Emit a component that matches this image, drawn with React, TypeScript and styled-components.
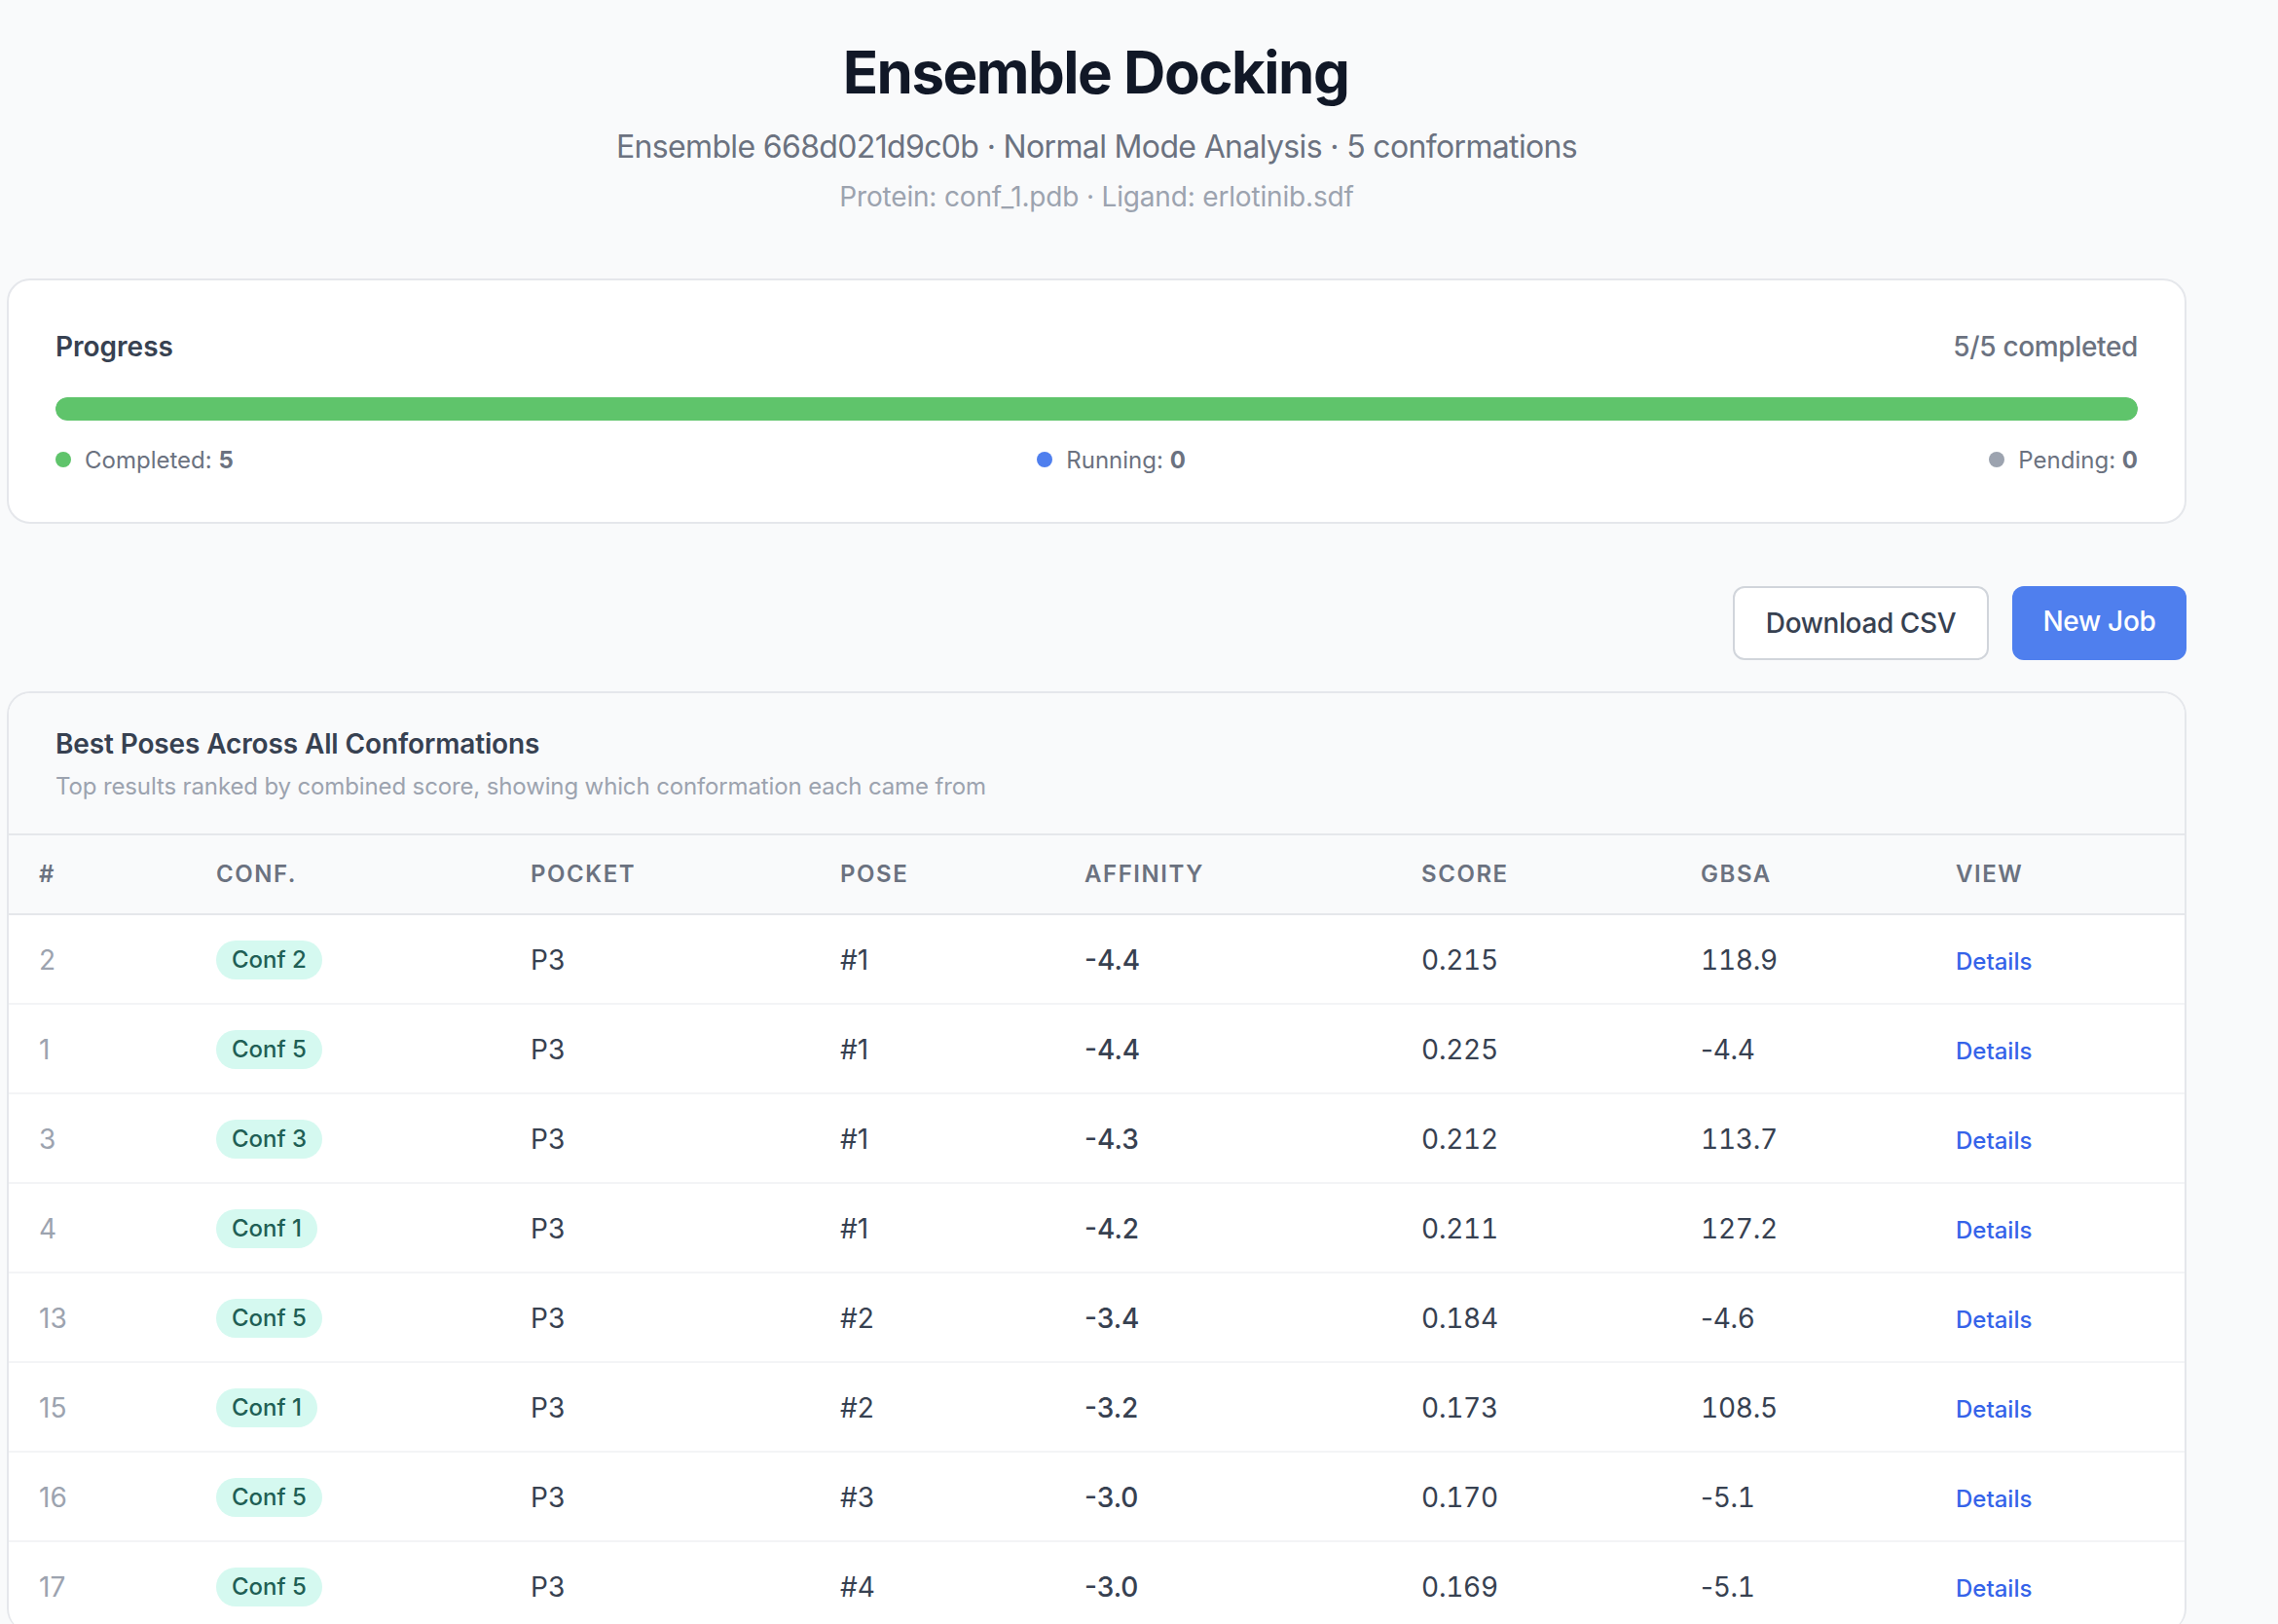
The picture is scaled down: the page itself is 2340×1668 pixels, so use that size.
import React from 'react';
import styled, { createGlobalStyle } from 'styled-components';

const GlobalStyle = createGlobalStyle`
  html,
  body {
    margin: 0;
    height: 1668px;
    overflow: hidden;
    background: #f9fafb;
    font-family: Inter, 'Noto Sans', sans-serif;
  }

  * {
    box-sizing: border-box;
  }
`;

const Page = styled.div`
  width: 2246px;
  padding-left: 7px;
`;

const Header = styled.header`
  height: 286px;
  padding-top: 39px;
  text-align: center;
`;

const Title = styled.h1`
  margin: 0;
  padding-right: 2px;
  font-size: 60px;
  line-height: 70px;
  font-weight: 700;
  letter-spacing: -1.5px;
  color: #111827;
`;

const Subtitle = styled.p`
  margin: 22px 0 0;
  font-size: 32px;
  line-height: 40px;
  letter-spacing: -0.65px;
  color: #6b7280;
`;

const Meta = styled.p`
  margin: 14px 0 0;
  font-size: 28px;
  line-height: 34px;
  letter-spacing: -0.17px;
  color: #9ca3af;
`;

const Card = styled.section`
  background: #fff;
  border: 2px solid #e5e7eb;
  border-radius: 24px;
  overflow: hidden;
`;

const ProgressCard = styled(Card)`
  height: 252px;
  padding: 48px 48px 0;
`;

const ProgressHead = styled.div`
  display: flex;
  justify-content: space-between;
  align-items: center;
  height: 40px;
  font-size: 28px;
`;

const ProgressLabel = styled.span`
  font-weight: 600;
  color: #374151;
`;

const ProgressCount = styled.span`
  font-weight: 500;
  letter-spacing: -0.35px;
  color: #6b7280;
`;

const Track = styled.div`
  height: 24px;
  margin-top: 32px;
  border-radius: 12px;
  background: #e5e7eb;
  overflow: hidden;
`;

const Fill = styled.div`
  height: 100%;
  border-radius: 12px;
  background: #5fc46b;
`;

const Legend = styled.div`
  display: flex;
  justify-content: space-between;
  margin-top: 24px;
`;

const LegendItem = styled.div`
  display: flex;
  align-items: center;
  gap: 14px;
  height: 32px;
  font-size: 24px;
  color: #6b7280;

  strong {
    font-weight: 700;
  }
`;

const Dot = styled.span<{ $color: string }>`
  width: 16px;
  height: 16px;
  border-radius: 50%;
  background: ${(p) => p.$color};
`;

const Actions = styled.div`
  display: flex;
  justify-content: flex-end;
  gap: 24px;
  margin-top: 64px;
`;

const OutlineButton = styled.button`
  width: 263px;
  height: 76px;
  padding: 0;
  border: 2px solid #d1d5db;
  border-radius: 12px;
  background: #fff;
  color: #374151;
  font: 500 28px Inter, sans-serif;
  letter-spacing: -0.4px;
`;

const PrimaryButton = styled.button`
  width: 179px;
  height: 76px;
  padding: 0 0 4px;
  border: 0;
  border-radius: 12px;
  background: #4f7fee;
  color: #fff;
  font: 500 28px Inter, sans-serif;
  letter-spacing: -0.3px;
`;

const ResultsCard = styled(Card)`
  margin-top: 32px;
  border-bottom: 0;
`;

const ResultsHead = styled.div`
  height: 146px;
  padding: 32px 48px 0;
  background: #f9fafb;
  border-bottom: 2px solid #e5e7eb;
`;

const ResultsTitle = styled.h2`
  margin: 0;
  font-size: 28px;
  line-height: 40px;
  font-weight: 600;
  letter-spacing: -0.13px;
  color: #374151;
`;

const ResultsHint = styled.p`
  margin: 7px 0 0;
  font-size: 24px;
  line-height: 34px;
  letter-spacing: -0.13px;
  color: #9ca3af;
`;

const Table = styled.table`
  width: 100%;
  table-layout: fixed;
  border-collapse: collapse;
`;

const HeadCell = styled.th`
  height: 81px;
  padding: 0 0 2px 31px;
  background: #f9fafb;
  border-bottom: 2px solid #e5e7eb;
  text-align: left;
  font-size: 24px;
  font-weight: 600;
  letter-spacing: 1.55px;
  color: #6b7280;
`;

const Row = styled.tr`
  height: 92px;
  border-bottom: 2px solid #f3f4f6;
`;

const Cell = styled.td<{ $strong?: boolean; $muted?: boolean; $numeric?: boolean }>`
  padding: 2px 0 0 31px;
  font-size: 28px;
  font-weight: ${(p) => (p.$strong ? 500 : 400)};
  font-variant-numeric: ${(p) => (p.$numeric ? 'tabular-nums' : 'normal')};
  letter-spacing: ${(p) => (p.$numeric ? '-0.25px' : 'normal')};
  color: ${(p) => (p.$muted ? '#9ca3af' : '#374151')};
`;

const LinkCell = styled(Cell)`
  padding-top: 1px;
`;

const Hyphen = styled.span`
  font-variant-numeric: normal;
`;

const Pill = styled.span`
  display: inline-block;
  height: 40px;
  padding: 0 16px;
  border-radius: 20px;
  background: #d5f9f0;
  color: #1f5f55;
  font-size: 24px;
  font-weight: 500;
  line-height: 40px;
`;

const DetailsLink = styled.a`
  color: #3563e9;
  font-size: 24px;
  font-weight: 500;
  text-decoration: none;
`;

const columns = [
  { label: '#', width: 182 },
  { label: 'Conf.', width: 323 },
  { label: 'Pocket', width: 318 },
  { label: 'Pose', width: 251 },
  { label: 'Affinity', width: 346 },
  { label: 'Score', width: 287 },
  { label: 'GBSA', width: 262 },
  { label: 'View', width: 266 },
];

const poses = [
  { rank: 2, conf: 2, pose: 1, affinity: '-4.4', score: '0.215', gbsa: '118.9' },
  { rank: 1, conf: 5, pose: 1, affinity: '-4.4', score: '0.225', gbsa: '-4.4' },
  { rank: 3, conf: 3, pose: 1, affinity: '-4.3', score: '0.212', gbsa: '113.7' },
  { rank: 4, conf: 1, pose: 1, affinity: '-4.2', score: '0.211', gbsa: '127.2' },
  { rank: 13, conf: 5, pose: 2, affinity: '-3.4', score: '0.184', gbsa: '-4.6' },
  { rank: 15, conf: 1, pose: 2, affinity: '-3.2', score: '0.173', gbsa: '108.5' },
  { rank: 16, conf: 5, pose: 3, affinity: '-3.0', score: '0.170', gbsa: '-5.1' },
  { rank: 17, conf: 5, pose: 4, affinity: '-3.0', score: '0.169', gbsa: '-5.1' },
];

const App: React.FunctionComponent = () => (
  <Page>
    <GlobalStyle />
    <Header>
      <Title>Ensemble Docking</Title>
      <Subtitle>Ensemble 668d021d9c0b · Normal Mode Analysis · 5 conformations</Subtitle>
      <Meta>Protein: conf_1.pdb · Ligand: erlotinib.sdf</Meta>
    </Header>

    <ProgressCard>
      <ProgressHead>
        <ProgressLabel>Progress</ProgressLabel>
        <ProgressCount>5/5 completed</ProgressCount>
      </ProgressHead>
      <Track>
        <Fill />
      </Track>
      <Legend>
        <LegendItem>
          <Dot $color="#5fc46b" />
          <span>
            Completed: <strong>5</strong>
          </span>
        </LegendItem>
        <LegendItem>
          <Dot $color="#4f7fee" />
          <span>
            Running: <strong>0</strong>
          </span>
        </LegendItem>
        <LegendItem>
          <Dot $color="#9ca3af" />
          <span>
            Pending: <strong>0</strong>
          </span>
        </LegendItem>
      </Legend>
    </ProgressCard>

    <Actions>
      <OutlineButton>Download CSV</OutlineButton>
      <PrimaryButton>New Job</PrimaryButton>
    </Actions>

    <ResultsCard>
      <ResultsHead>
        <ResultsTitle>Best Poses Across All Conformations</ResultsTitle>
        <ResultsHint>Top results ranked by combined score, showing which conformation each came from</ResultsHint>
      </ResultsHead>
      <Table>
        <colgroup>
          {columns.map((col) => (
            <col key={col.label} width={col.width} />
          ))}
        </colgroup>
        <thead>
          <tr>
            {columns.map((col) => (
              <HeadCell key={col.label}>{col.label.toUpperCase()}</HeadCell>
            ))}
          </tr>
        </thead>
        <tbody>
          {poses.map((row) => (
            <Row key={row.rank}>
              <Cell $muted>{row.rank}</Cell>
              <Cell>
                <Pill>Conf {row.conf}</Pill>
              </Cell>
              <Cell>P3</Cell>
              <Cell>#{row.pose}</Cell>
              <Cell $strong>{row.affinity}</Cell>
              <Cell $numeric>{row.score}</Cell>
              <Cell $numeric>
                {row.gbsa.startsWith('-') ? (
                  <>
                    <Hyphen>-</Hyphen>
                    {row.gbsa.slice(1)}
                  </>
                ) : (
                  row.gbsa
                )}
              </Cell>
              <LinkCell>
                <DetailsLink href="#">Details</DetailsLink>
              </LinkCell>
            </Row>
          ))}
        </tbody>
      </Table>
    </ResultsCard>
  </Page>
);

export default App;
